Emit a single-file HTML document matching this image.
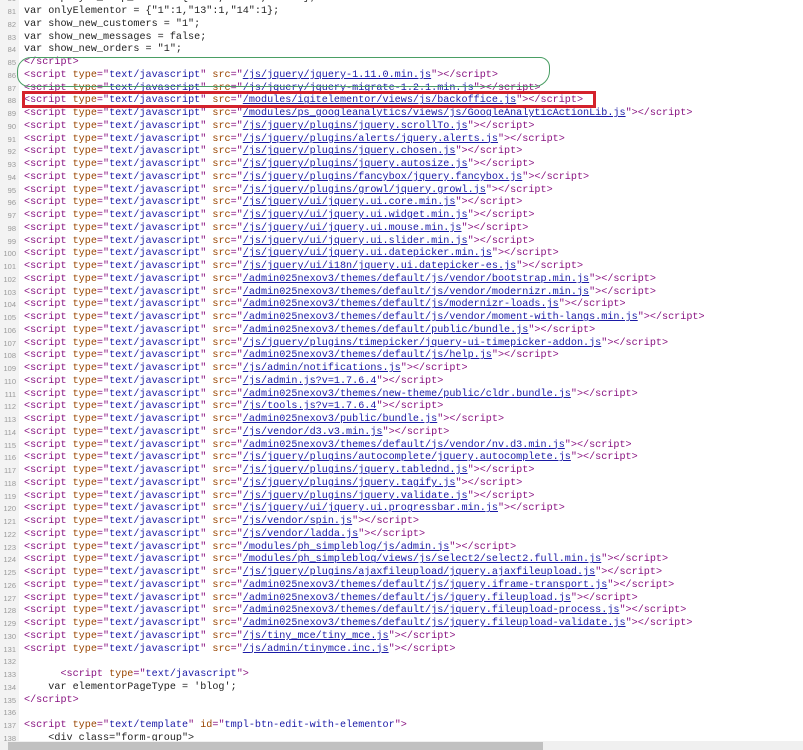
<!DOCTYPE html>
<html><head><meta charset="utf-8"><style>
html,body{margin:0;padding:0;width:803px;height:750px;overflow:hidden;background:#fff;}
#g{position:absolute;left:0;top:0;width:19px;height:741px;background:#f3f3f3;}
#c{position:absolute;left:0;top:-6.6px;font-family:"Liberation Mono",monospace;font-size:10.13px;line-height:12.75px;color:#222;}
.l{position:relative;height:12.75px;padding-left:24px;white-space:pre;}
.n{position:absolute;left:0;width:16px;text-align:right;font-family:"Liberation Sans",sans-serif;font-size:7.5px;color:#999;}
.t{color:#881280}.a{color:#994500}.v{color:#1a1aa6}.u{color:#1a1aa6;text-decoration:underline}
#sb{position:absolute;left:0;top:741px;width:803px;height:9px;background:#f0f0f0;}
#th{position:absolute;left:8px;top:742px;width:535px;height:8px;background:#c1c1c1;}
#red{position:absolute;left:22px;top:91px;width:568px;height:11px;border:3px solid #d4222c;}
#grn{position:absolute;left:17px;top:57px;width:531px;height:28px;border:1px solid #4a9e64;border-radius:14px 10px 16px 12px;}
</style></head><body>
<div id="g"></div>
<div id="c"><div class="l"><span class="n">80</span>var employee_help_class = {"1":1,"13":1,"14":1};</div><div class="l"><span class="n">81</span>var onlyElementor = {"1":1,"13":1,"14":1};</div><div class="l"><span class="n">82</span>var show_new_customers = "1";</div><div class="l"><span class="n">83</span>var show_new_messages = false;</div><div class="l"><span class="n">84</span>var show_new_orders = "1";</div><div class="l"><span class="n">85</span><span class="t">&lt;/script&gt;</span></div><div class="l"><span class="n">86</span><span class="t">&lt;script </span><span class="a">type</span><span class="t">="</span><span class="v">text/javascript</span><span class="t">" </span><span class="a">src</span><span class="t">="</span><span class="u">/js/jquery/jquery-1.11.0.min.js</span><span class="t">"&gt;&lt;/script&gt;</span></div><div class="l"><span class="n">87</span><span class="t">&lt;script </span><span class="a">type</span><span class="t">="</span><span class="v">text/javascript</span><span class="t">" </span><span class="a">src</span><span class="t">="</span><span class="u">/js/jquery/jquery-migrate-1.2.1.min.js</span><span class="t">"&gt;&lt;/script&gt;</span></div><div class="l"><span class="n">88</span><span class="t">&lt;script </span><span class="a">type</span><span class="t">="</span><span class="v">text/javascript</span><span class="t">" </span><span class="a">src</span><span class="t">="</span><span class="u">/modules/igitelementor/views/js/backoffice.js</span><span class="t">"&gt;&lt;/script&gt;</span></div><div class="l"><span class="n">89</span><span class="t">&lt;script </span><span class="a">type</span><span class="t">="</span><span class="v">text/javascript</span><span class="t">" </span><span class="a">src</span><span class="t">="</span><span class="u">/modules/ps_googleanalytics/views/js/GoogleAnalyticActionLib.js</span><span class="t">"&gt;&lt;/script&gt;</span></div><div class="l"><span class="n">90</span><span class="t">&lt;script </span><span class="a">type</span><span class="t">="</span><span class="v">text/javascript</span><span class="t">" </span><span class="a">src</span><span class="t">="</span><span class="u">/js/jquery/plugins/jquery.scrollTo.js</span><span class="t">"&gt;&lt;/script&gt;</span></div><div class="l"><span class="n">91</span><span class="t">&lt;script </span><span class="a">type</span><span class="t">="</span><span class="v">text/javascript</span><span class="t">" </span><span class="a">src</span><span class="t">="</span><span class="u">/js/jquery/plugins/alerts/jquery.alerts.js</span><span class="t">"&gt;&lt;/script&gt;</span></div><div class="l"><span class="n">92</span><span class="t">&lt;script </span><span class="a">type</span><span class="t">="</span><span class="v">text/javascript</span><span class="t">" </span><span class="a">src</span><span class="t">="</span><span class="u">/js/jquery/plugins/jquery.chosen.js</span><span class="t">"&gt;&lt;/script&gt;</span></div><div class="l"><span class="n">93</span><span class="t">&lt;script </span><span class="a">type</span><span class="t">="</span><span class="v">text/javascript</span><span class="t">" </span><span class="a">src</span><span class="t">="</span><span class="u">/js/jquery/plugins/jquery.autosize.js</span><span class="t">"&gt;&lt;/script&gt;</span></div><div class="l"><span class="n">94</span><span class="t">&lt;script </span><span class="a">type</span><span class="t">="</span><span class="v">text/javascript</span><span class="t">" </span><span class="a">src</span><span class="t">="</span><span class="u">/js/jquery/plugins/fancybox/jquery.fancybox.js</span><span class="t">"&gt;&lt;/script&gt;</span></div><div class="l"><span class="n">95</span><span class="t">&lt;script </span><span class="a">type</span><span class="t">="</span><span class="v">text/javascript</span><span class="t">" </span><span class="a">src</span><span class="t">="</span><span class="u">/js/jquery/plugins/growl/jquery.growl.js</span><span class="t">"&gt;&lt;/script&gt;</span></div><div class="l"><span class="n">96</span><span class="t">&lt;script </span><span class="a">type</span><span class="t">="</span><span class="v">text/javascript</span><span class="t">" </span><span class="a">src</span><span class="t">="</span><span class="u">/js/jquery/ui/jquery.ui.core.min.js</span><span class="t">"&gt;&lt;/script&gt;</span></div><div class="l"><span class="n">97</span><span class="t">&lt;script </span><span class="a">type</span><span class="t">="</span><span class="v">text/javascript</span><span class="t">" </span><span class="a">src</span><span class="t">="</span><span class="u">/js/jquery/ui/jquery.ui.widget.min.js</span><span class="t">"&gt;&lt;/script&gt;</span></div><div class="l"><span class="n">98</span><span class="t">&lt;script </span><span class="a">type</span><span class="t">="</span><span class="v">text/javascript</span><span class="t">" </span><span class="a">src</span><span class="t">="</span><span class="u">/js/jquery/ui/jquery.ui.mouse.min.js</span><span class="t">"&gt;&lt;/script&gt;</span></div><div class="l"><span class="n">99</span><span class="t">&lt;script </span><span class="a">type</span><span class="t">="</span><span class="v">text/javascript</span><span class="t">" </span><span class="a">src</span><span class="t">="</span><span class="u">/js/jquery/ui/jquery.ui.slider.min.js</span><span class="t">"&gt;&lt;/script&gt;</span></div><div class="l"><span class="n">100</span><span class="t">&lt;script </span><span class="a">type</span><span class="t">="</span><span class="v">text/javascript</span><span class="t">" </span><span class="a">src</span><span class="t">="</span><span class="u">/js/jquery/ui/jquery.ui.datepicker.min.js</span><span class="t">"&gt;&lt;/script&gt;</span></div><div class="l"><span class="n">101</span><span class="t">&lt;script </span><span class="a">type</span><span class="t">="</span><span class="v">text/javascript</span><span class="t">" </span><span class="a">src</span><span class="t">="</span><span class="u">/js/jquery/ui/i18n/jquery.ui.datepicker-es.js</span><span class="t">"&gt;&lt;/script&gt;</span></div><div class="l"><span class="n">102</span><span class="t">&lt;script </span><span class="a">type</span><span class="t">="</span><span class="v">text/javascript</span><span class="t">" </span><span class="a">src</span><span class="t">="</span><span class="u">/admin025nexov3/themes/default/js/vendor/bootstrap.min.js</span><span class="t">"&gt;&lt;/script&gt;</span></div><div class="l"><span class="n">103</span><span class="t">&lt;script </span><span class="a">type</span><span class="t">="</span><span class="v">text/javascript</span><span class="t">" </span><span class="a">src</span><span class="t">="</span><span class="u">/admin025nexov3/themes/default/js/vendor/modernizr.min.js</span><span class="t">"&gt;&lt;/script&gt;</span></div><div class="l"><span class="n">104</span><span class="t">&lt;script </span><span class="a">type</span><span class="t">="</span><span class="v">text/javascript</span><span class="t">" </span><span class="a">src</span><span class="t">="</span><span class="u">/admin025nexov3/themes/default/js/modernizr-loads.js</span><span class="t">"&gt;&lt;/script&gt;</span></div><div class="l"><span class="n">105</span><span class="t">&lt;script </span><span class="a">type</span><span class="t">="</span><span class="v">text/javascript</span><span class="t">" </span><span class="a">src</span><span class="t">="</span><span class="u">/admin025nexov3/themes/default/js/vendor/moment-with-langs.min.js</span><span class="t">"&gt;&lt;/script&gt;</span></div><div class="l"><span class="n">106</span><span class="t">&lt;script </span><span class="a">type</span><span class="t">="</span><span class="v">text/javascript</span><span class="t">" </span><span class="a">src</span><span class="t">="</span><span class="u">/admin025nexov3/themes/default/public/bundle.js</span><span class="t">"&gt;&lt;/script&gt;</span></div><div class="l"><span class="n">107</span><span class="t">&lt;script </span><span class="a">type</span><span class="t">="</span><span class="v">text/javascript</span><span class="t">" </span><span class="a">src</span><span class="t">="</span><span class="u">/js/jquery/plugins/timepicker/jquery-ui-timepicker-addon.js</span><span class="t">"&gt;&lt;/script&gt;</span></div><div class="l"><span class="n">108</span><span class="t">&lt;script </span><span class="a">type</span><span class="t">="</span><span class="v">text/javascript</span><span class="t">" </span><span class="a">src</span><span class="t">="</span><span class="u">/admin025nexov3/themes/default/js/help.js</span><span class="t">"&gt;&lt;/script&gt;</span></div><div class="l"><span class="n">109</span><span class="t">&lt;script </span><span class="a">type</span><span class="t">="</span><span class="v">text/javascript</span><span class="t">" </span><span class="a">src</span><span class="t">="</span><span class="u">/js/admin/notifications.js</span><span class="t">"&gt;&lt;/script&gt;</span></div><div class="l"><span class="n">110</span><span class="t">&lt;script </span><span class="a">type</span><span class="t">="</span><span class="v">text/javascript</span><span class="t">" </span><span class="a">src</span><span class="t">="</span><span class="u">/js/admin.js?v=1.7.6.4</span><span class="t">"&gt;&lt;/script&gt;</span></div><div class="l"><span class="n">111</span><span class="t">&lt;script </span><span class="a">type</span><span class="t">="</span><span class="v">text/javascript</span><span class="t">" </span><span class="a">src</span><span class="t">="</span><span class="u">/admin025nexov3/themes/new-theme/public/cldr.bundle.js</span><span class="t">"&gt;&lt;/script&gt;</span></div><div class="l"><span class="n">112</span><span class="t">&lt;script </span><span class="a">type</span><span class="t">="</span><span class="v">text/javascript</span><span class="t">" </span><span class="a">src</span><span class="t">="</span><span class="u">/js/tools.js?v=1.7.6.4</span><span class="t">"&gt;&lt;/script&gt;</span></div><div class="l"><span class="n">113</span><span class="t">&lt;script </span><span class="a">type</span><span class="t">="</span><span class="v">text/javascript</span><span class="t">" </span><span class="a">src</span><span class="t">="</span><span class="u">/admin025nexov3/public/bundle.js</span><span class="t">"&gt;&lt;/script&gt;</span></div><div class="l"><span class="n">114</span><span class="t">&lt;script </span><span class="a">type</span><span class="t">="</span><span class="v">text/javascript</span><span class="t">" </span><span class="a">src</span><span class="t">="</span><span class="u">/js/vendor/d3.v3.min.js</span><span class="t">"&gt;&lt;/script&gt;</span></div><div class="l"><span class="n">115</span><span class="t">&lt;script </span><span class="a">type</span><span class="t">="</span><span class="v">text/javascript</span><span class="t">" </span><span class="a">src</span><span class="t">="</span><span class="u">/admin025nexov3/themes/default/js/vendor/nv.d3.min.js</span><span class="t">"&gt;&lt;/script&gt;</span></div><div class="l"><span class="n">116</span><span class="t">&lt;script </span><span class="a">type</span><span class="t">="</span><span class="v">text/javascript</span><span class="t">" </span><span class="a">src</span><span class="t">="</span><span class="u">/js/jquery/plugins/autocomplete/jquery.autocomplete.js</span><span class="t">"&gt;&lt;/script&gt;</span></div><div class="l"><span class="n">117</span><span class="t">&lt;script </span><span class="a">type</span><span class="t">="</span><span class="v">text/javascript</span><span class="t">" </span><span class="a">src</span><span class="t">="</span><span class="u">/js/jquery/plugins/jquery.tablednd.js</span><span class="t">"&gt;&lt;/script&gt;</span></div><div class="l"><span class="n">118</span><span class="t">&lt;script </span><span class="a">type</span><span class="t">="</span><span class="v">text/javascript</span><span class="t">" </span><span class="a">src</span><span class="t">="</span><span class="u">/js/jquery/plugins/jquery.tagify.js</span><span class="t">"&gt;&lt;/script&gt;</span></div><div class="l"><span class="n">119</span><span class="t">&lt;script </span><span class="a">type</span><span class="t">="</span><span class="v">text/javascript</span><span class="t">" </span><span class="a">src</span><span class="t">="</span><span class="u">/js/jquery/plugins/jquery.validate.js</span><span class="t">"&gt;&lt;/script&gt;</span></div><div class="l"><span class="n">120</span><span class="t">&lt;script </span><span class="a">type</span><span class="t">="</span><span class="v">text/javascript</span><span class="t">" </span><span class="a">src</span><span class="t">="</span><span class="u">/js/jquery/ui/jquery.ui.progressbar.min.js</span><span class="t">"&gt;&lt;/script&gt;</span></div><div class="l"><span class="n">121</span><span class="t">&lt;script </span><span class="a">type</span><span class="t">="</span><span class="v">text/javascript</span><span class="t">" </span><span class="a">src</span><span class="t">="</span><span class="u">/js/vendor/spin.js</span><span class="t">"&gt;&lt;/script&gt;</span></div><div class="l"><span class="n">122</span><span class="t">&lt;script </span><span class="a">type</span><span class="t">="</span><span class="v">text/javascript</span><span class="t">" </span><span class="a">src</span><span class="t">="</span><span class="u">/js/vendor/ladda.js</span><span class="t">"&gt;&lt;/script&gt;</span></div><div class="l"><span class="n">123</span><span class="t">&lt;script </span><span class="a">type</span><span class="t">="</span><span class="v">text/javascript</span><span class="t">" </span><span class="a">src</span><span class="t">="</span><span class="u">/modules/ph_simpleblog/js/admin.js</span><span class="t">"&gt;&lt;/script&gt;</span></div><div class="l"><span class="n">124</span><span class="t">&lt;script </span><span class="a">type</span><span class="t">="</span><span class="v">text/javascript</span><span class="t">" </span><span class="a">src</span><span class="t">="</span><span class="u">/modules/ph_simpleblog/views/js/select2/select2.full.min.js</span><span class="t">"&gt;&lt;/script&gt;</span></div><div class="l"><span class="n">125</span><span class="t">&lt;script </span><span class="a">type</span><span class="t">="</span><span class="v">text/javascript</span><span class="t">" </span><span class="a">src</span><span class="t">="</span><span class="u">/js/jquery/plugins/ajaxfileupload/jquery.ajaxfileupload.js</span><span class="t">"&gt;&lt;/script&gt;</span></div><div class="l"><span class="n">126</span><span class="t">&lt;script </span><span class="a">type</span><span class="t">="</span><span class="v">text/javascript</span><span class="t">" </span><span class="a">src</span><span class="t">="</span><span class="u">/admin025nexov3/themes/default/js/jquery.iframe-transport.js</span><span class="t">"&gt;&lt;/script&gt;</span></div><div class="l"><span class="n">127</span><span class="t">&lt;script </span><span class="a">type</span><span class="t">="</span><span class="v">text/javascript</span><span class="t">" </span><span class="a">src</span><span class="t">="</span><span class="u">/admin025nexov3/themes/default/js/jquery.fileupload.js</span><span class="t">"&gt;&lt;/script&gt;</span></div><div class="l"><span class="n">128</span><span class="t">&lt;script </span><span class="a">type</span><span class="t">="</span><span class="v">text/javascript</span><span class="t">" </span><span class="a">src</span><span class="t">="</span><span class="u">/admin025nexov3/themes/default/js/jquery.fileupload-process.js</span><span class="t">"&gt;&lt;/script&gt;</span></div><div class="l"><span class="n">129</span><span class="t">&lt;script </span><span class="a">type</span><span class="t">="</span><span class="v">text/javascript</span><span class="t">" </span><span class="a">src</span><span class="t">="</span><span class="u">/admin025nexov3/themes/default/js/jquery.fileupload-validate.js</span><span class="t">"&gt;&lt;/script&gt;</span></div><div class="l"><span class="n">130</span><span class="t">&lt;script </span><span class="a">type</span><span class="t">="</span><span class="v">text/javascript</span><span class="t">" </span><span class="a">src</span><span class="t">="</span><span class="u">/js/tiny_mce/tiny_mce.js</span><span class="t">"&gt;&lt;/script&gt;</span></div><div class="l"><span class="n">131</span><span class="t">&lt;script </span><span class="a">type</span><span class="t">="</span><span class="v">text/javascript</span><span class="t">" </span><span class="a">src</span><span class="t">="</span><span class="u">/js/admin/tinymce.inc.js</span><span class="t">"&gt;&lt;/script&gt;</span></div><div class="l"><span class="n">132</span></div><div class="l"><span class="n">133</span>      <span class="t">&lt;script </span><span class="a">type</span><span class="t">="</span><span class="v">text/javascript</span><span class="t">"&gt;</span></div><div class="l"><span class="n">134</span>    var elementorPageType = 'blog';</div><div class="l"><span class="n">135</span><span class="t">&lt;/script&gt;</span></div><div class="l"><span class="n">136</span></div><div class="l"><span class="n">137</span><span class="t">&lt;script </span><span class="a">type</span><span class="t">="</span><span class="v">text/template</span><span class="t">" </span><span class="a">id</span><span class="t">="</span><span class="v">tmpl-btn-edit-with-elementor</span><span class="t">"&gt;</span></div><div class="l"><span class="n">138</span>    &lt;div class="form-group"&gt;</div></div>
<div id="grn"></div>
<div id="red"></div>
<div id="sb"></div>
<div id="th"></div>
</body></html>
